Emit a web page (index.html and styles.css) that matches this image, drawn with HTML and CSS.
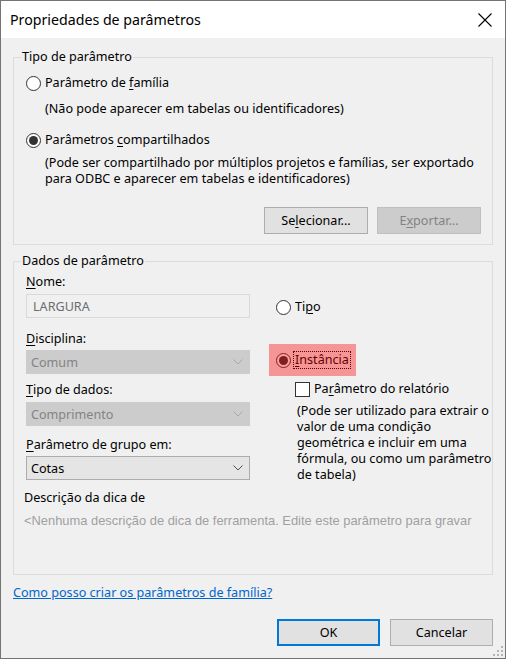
FILE: index.html
```html
<!DOCTYPE html>
<html lang="pt">
<head>
<meta charset="utf-8">
<title>Propriedades de parâmetros</title>
<link rel="stylesheet" href="styles.css">
</head>
<body>
<div class="window">
  <div class="titlebar">
    <span class="title">Propriedades de parâmetros</span>
    <svg class="close" width="14" height="14" viewBox="0 0 14 14"><path d="M0.5 0.5L13.5 13.5M13.5 0.5L0.5 13.5" stroke="#000" stroke-width="1.1" fill="none"/></svg>
  </div>
  <div class="content">
    <fieldset class="group group-type">
      <legend>Tipo de parâmetro</legend>
      <div class="row"><span class="radio"></span><span>Parâmetro de <u>f</u>amília</span></div>
      <div class="desc d1">(Não pode aparecer em tabelas ou identificadores)</div>
      <div class="row r2"><span class="radio checked"></span><span>Parâmetros <u>c</u>ompartilhados</span></div>
      <div class="desc d2">(Pode ser compartilhado por múltiplos projetos e famílias, ser exportado<br>para ODBC e aparecer em tabelas e identificadores)</div>
      <div class="btn-row">
        <div class="btn">Se<u>l</u>ecionar...</div>
        <div class="btn disabled">E<u>x</u>portar...</div>
      </div>
    </fieldset>

    <fieldset class="group group-data">
      <legend>Dados de parâmetro</legend>
      <div class="data-cols">
        <div class="col-left">
          <div class="label"><u>N</u>ome:</div>
          <div class="textbox">LARGURA</div>
          <div class="label l-disc"><u>D</u>isciplina:</div>
          <div class="select disabled s-disc"><span>Comum</span><svg class="chev" width="10" height="6" viewBox="0 0 10 6"><path d="M0.5 0.5L5 5L9.5 0.5" fill="none" stroke="currentColor" stroke-width="1"/></svg></div>
          <div class="label l-tipo"><u>T</u>ipo de dados:</div>
          <div class="select disabled s-tipo"><span>Comprimento</span><svg class="chev" width="10" height="6" viewBox="0 0 10 6"><path d="M0.5 0.5L5 5L9.5 0.5" fill="none" stroke="currentColor" stroke-width="1"/></svg></div>
          <div class="label l-grupo"><u>P</u>arâmetro de grupo em:</div>
          <div class="select s-grupo"><span>Cotas</span><svg class="chev" width="10" height="6" viewBox="0 0 10 6"><path d="M0.5 0.5L5 5L9.5 0.5" fill="none" stroke="currentColor" stroke-width="1"/></svg></div>
        </div>
        <div class="col-right">
          <div class="row r-tipo"><span class="radio"></span><span>Ti<u>p</u>o</span></div>
          <div class="row r-inst"><span class="radio checked"></span><span class="focus"><u>I</u>nstância</span><span class="highlight"></span></div>
          <div class="row r-check"><span class="checkbox"></span><span>Pa<u>r</u>âmetro do relatório</span></div>
          <div class="desc d-inst">(Pode ser utilizado para extrair o<br>valor de uma condição<br>geométrica e incluir em uma<br>fórmula, ou como um parâmetro<br>de tabela)</div>
        </div>
      </div>
      <div class="tip-label">Descrição da dica de</div>
      <div class="tip-text">&lt;Nenhuma descrição de dica de ferramenta. Edite este parâmetro para gravar</div>
    </fieldset>

    <a class="help-link" href="#">Como posso criar os parâmetros de família?</a>

    <div class="footer">
      <div class="btn primary">OK</div>
      <div class="btn">Cancelar</div>
    </div>
  </div>
  <svg class="grip" width="12" height="12" viewBox="0 0 12 12">
    <rect x="9" y="1" width="2" height="2" fill="#b4b4b4"/>
    <rect x="5" y="5" width="2" height="2" fill="#b4b4b4"/>
    <rect x="9" y="5" width="2" height="2" fill="#b4b4b4"/>
    <rect x="1" y="9" width="2" height="2" fill="#b4b4b4"/>
    <rect x="5" y="9" width="2" height="2" fill="#b4b4b4"/>
    <rect x="9" y="9" width="2" height="2" fill="#b4b4b4"/>
  </svg>
</div>
</body>
</html>
```

FILE: styles.css
```css
* { box-sizing: border-box; }
html, body { margin: 0; padding: 0; }
body {
  width: 506px;
  height: 659px;
  background: #fff;
  font-family: "Noto Sans", "Open Sans", sans-serif;
  font-size: 12.6px;
  color: #000;
}
u { text-decoration-thickness: 1px; text-underline-offset: 2px; }

.window {
  position: relative;
  width: 506px;
  height: 659px;
  border: 1px solid #747474;
  background: #f0f0f0;
  display: flex;
  flex-direction: column;
}
.titlebar {
  height: 37px;
  flex: none;
  background: #fff;
  display: flex;
  align-items: center;
  justify-content: space-between;
  padding: 0 13px 0 9px;
}
.title { font-size: 14.2px; line-height: 20px; }
.close { display: block; margin-top: 1px; }

.content {
  flex: 1;
  padding: 0 12px;
  display: flex;
  flex-direction: column;
}

.group {
  margin: 0;
  min-width: 0;
  border: 1px solid #dcdcdc;
  padding: 10px 11px 10px 12px;
}
.group legend {
  padding: 0 1px;
  margin-left: -5px;
  line-height: 16px;
}
.group-type { margin-top: 11px; }
.group-data { margin-top: 8px; padding: 5px 11px 45px 12px; }

.row {
  display: flex;
  align-items: center;
  height: 16px;
  line-height: 16px;
  white-space: nowrap;
}
.radio {
  flex: none;
  width: 15px;
  height: 15px;
  border: 1px solid #333;
  border-radius: 50%;
  background: #fff;
  margin-right: 4px;
  display: flex;
  align-items: center;
  justify-content: center;
}
.radio.checked::after {
  content: "";
  width: 9px;
  height: 9px;
  border-radius: 50%;
  background: #333;
}
.checkbox {
  flex: none;
  width: 15px;
  height: 15px;
  border: 1px solid #333;
  background: #fff;
  margin-right: 4px;
}

.desc { line-height: 16px; padding-left: 19px; white-space: nowrap; }
.d1 { margin-top: 10px; }
.r2 { margin-top: 15px; }
.d2 { margin-top: 7px; }

.btn-row {
  margin-top: 20px;
  display: flex;
  justify-content: flex-end;
  gap: 9px;
}
.btn {
  width: 104px;
  height: 27px;
  border: 1px solid #adadad;
  background: #e1e1e1;
  display: flex;
  align-items: center;
  justify-content: center;
  line-height: 16px;
}
.btn.disabled { background: #cccccc; border-color: #bfbfbf; color: #838383; }
.btn.primary { border: 2px solid #0078d7; }

.data-cols { display: flex; gap: 26px; align-items: flex-start; }
.col-left { width: 224px; flex: none; display: flex; flex-direction: column; }
.col-right { display: flex; flex-direction: column; }
.label { line-height: 16px; height: 16px; }
.textbox {
  margin-top: 4px;
  height: 24px;
  border: 1px solid #d9d9d9;
  background: #f0f0f0;
  color: #6d6d6d;
  padding-left: 6px;
  display: flex;
  align-items: center;
}
.select {
  height: 24px;
  border: 1px solid #adadad;
  background: #e5e5e5;
  padding: 0 6px 0 4px;
  display: flex;
  align-items: center;
  justify-content: space-between;
  color: #000;
}
.select .chev { color: #505050; display: block; }
.select.disabled { background: #cccccc; border-color: #cccccc; color: #838383; }
.select.disabled .chev { color: #a8a8a8; }
.l-disc { margin-top: 13px; }
.s-disc { margin-top: 3px; }
.l-tipo { margin-top: 8px; }
.s-tipo { margin-top: 4px; }
.l-grupo { margin-top: 11px; }
.s-grupo { margin-top: 3px; }

.r-tipo { margin-top: 25px; }
.r-inst { margin-top: 37px; position: relative; }
.focus { outline: 1px dotted #000; outline-offset: 0; padding: 0 1px; margin-left: -1px; }
.highlight {
  position: absolute;
  left: -7px;
  top: -8px;
  width: 87px;
  height: 32px;
  background: rgba(255, 0, 0, 0.38);
}
.r-check { margin-top: 13px; margin-left: 19px; }
.d-inst { margin-top: 6px; padding-left: 21px; }

.tip-label { margin-top: 7px; margin-left: -2px; line-height: 16px; }
.tip-text {
  margin-top: 7px;
  margin-left: -2px;
  line-height: 16px;
  white-space: nowrap;
  color: #a0a0a0;
  font-family: "Liberation Sans", Arial, sans-serif;
  font-size: 12.9px;
}

.help-link {
  margin-top: 10px;
  align-self: flex-start;
  line-height: 16px;
  color: #0066cc;
  text-decoration: underline;
}

.footer {
  margin-top: 18px;
  display: flex;
  justify-content: flex-end;
  gap: 10px;
}
.footer .btn { width: 103px; }

.grip { position: absolute; right: 1px; bottom: 1px; display: block; }
```
